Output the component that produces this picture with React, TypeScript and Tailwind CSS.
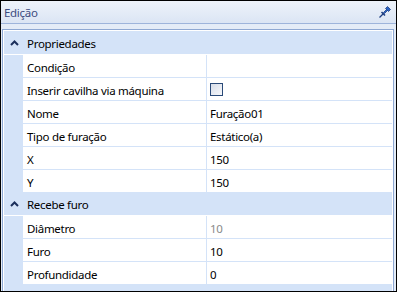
import React from 'react';

type Row = { name: string; value?: string; kind?: 'check' | 'readonly' };

const groups: { title: string; rows: Row[] }[] = [
  {
    title: 'Propriedades',
    rows: [
      { name: 'Condição', value: '' },
      { name: 'Inserir cavilha via máquina', kind: 'check' },
      { name: 'Nome', value: 'Furação01' },
      { name: 'Tipo de furação', value: 'Estático(a)' },
      { name: 'X', value: '150' },
      { name: 'Y', value: '150' },
    ],
  },
  {
    title: 'Recebe furo',
    rows: [
      { name: 'Diâmetro', value: '10', kind: 'readonly' },
      { name: 'Furo', value: '10' },
      { name: 'Profundidade', value: '0' },
    ],
  },
];

const Chevron = () => (
  <svg width="9" height="6" viewBox="0 0 9 6" className="block">
    <path d="M1 5 L4.5 1.5 L8 5" fill="none" stroke="#1b2f5c" strokeWidth="2" />
  </svg>
);

const Pin = () => (
  <svg width="12" height="12" viewBox="0 0 12 12" className="block">
    <path d="M0.5 11.5 L4.5 7.5" stroke="#1e3f82" strokeWidth="1.2" />
    <path d="M2.5 6 L6 9.5" stroke="#1e3f82" strokeWidth="1.6" />
    <path d="M4.5 6.5 L7.5 3.5 L8.5 4.5 L5.5 7.5 Z" fill="#2b63c4" stroke="#1e3f82" strokeWidth="0.8" />
    <path d="M6.5 2.5 L9.5 5.5 L11.5 3.5 L8.5 0.5 Z" fill="#2b63c4" stroke="#1e3f82" strokeWidth="0.8" />
  </svg>
);

const Checkbox = () => (
  <div className="w-[13px] h-[13px] border border-[#2a4a78] bg-gradient-to-br from-[#d7dde8] to-[#f7f8fb]" />
);

const App: React.FC = () => {
  return (
    <div
      className="w-[397px] h-[292px] border border-black bg-[#e4ecf7] flex flex-col text-[11.5px] tracking-[-0.3px] text-black"
      style={{ fontFamily: '"Noto Sans", "Open Sans", sans-serif' }}
    >
      {/* Title bar */}
      <div className="h-[22px] shrink-0 bg-gradient-to-b from-[#eef3fa] to-[#dbe5f4] flex items-center justify-between pl-[3px] pr-[5px]">
        <span className="text-[#3d4c80] leading-none pt-px">Edição</span>
        <Pin />
      </div>
      <div className="h-px shrink-0 bg-[#9db4db]" />

      {/* Property grid */}
      <div className="flex-1 flex flex-col pt-[5px] pl-px pr-[2px]">
        <div className="flex-1 border border-[#8ea8d3] border-b-0 flex flex-col">
          <div className="flex-1 border border-white border-b-0 bg-[#d4e3f8] flex flex-col pt-px">
            {groups.map((g) => (
              <div key={g.title} className="flex flex-col">
                <div className="h-[23px] flex items-center border-b border-white">
                  <div className="w-[19px] flex justify-center pl-[2px]">
                    <Chevron />
                  </div>
                  <span className="pl-[4px] leading-none pt-px">{g.title}</span>
                </div>
                {g.rows.map((r) => (
                  <div key={r.name} className="h-[23px] flex border-b border-[#d4e3f8]">
                    <div className="w-[19px] shrink-0" />
                    <div className="w-[184px] shrink-0 bg-white flex items-center pl-[4px] border-r border-[#d4e3f8]">
                      <span className="leading-none pt-[3px]">{r.name}</span>
                    </div>
                    <div className="flex-1 bg-white flex items-center pl-[3px]">
                      {r.kind === 'check' ? (
                        <Checkbox />
                      ) : (
                        <span
                          className={
                            r.kind === 'readonly' ? 'leading-none pt-[3px] text-[#8a8a8a]' : 'leading-none pt-[3px]'
                          }
                        >
                          {r.value}
                        </span>
                      )}
                    </div>
                  </div>
                ))}
              </div>
            ))}
          </div>
        </div>
      </div>
    </div>
  );
};

export default App;
